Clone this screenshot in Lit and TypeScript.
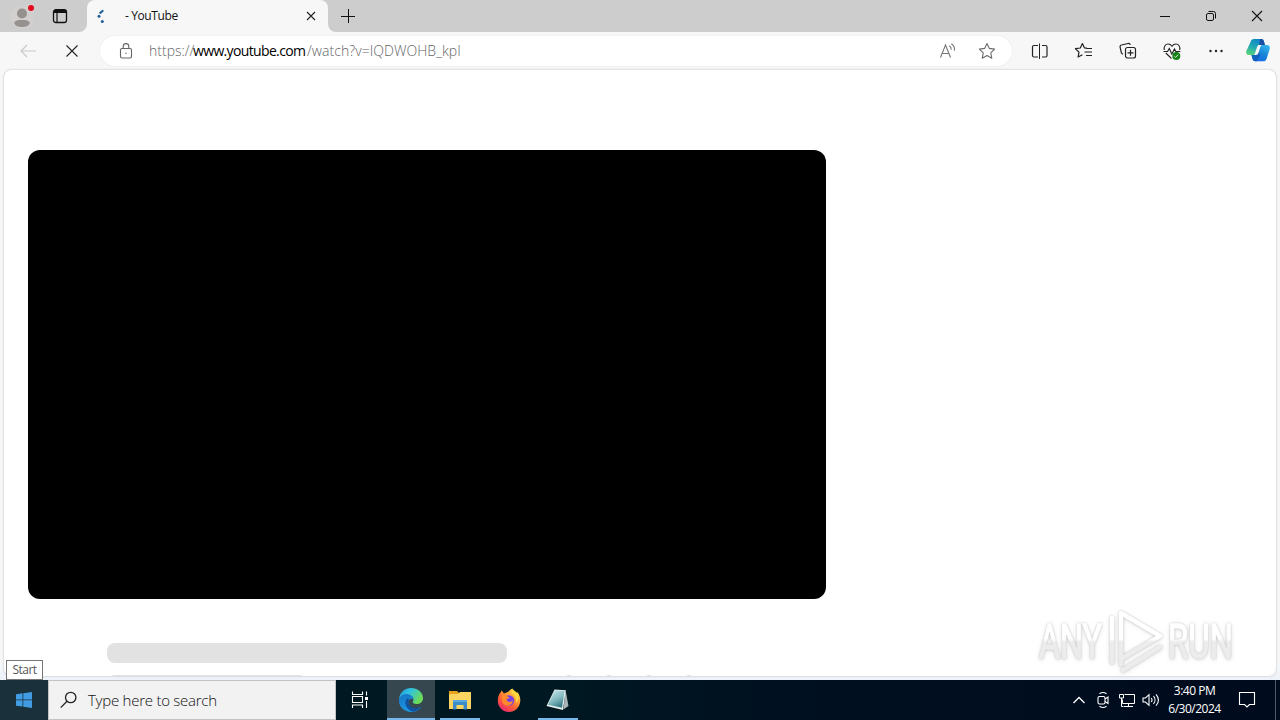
import {css, html, LitElement, svg} from 'lit'
import {customElement, property} from 'lit/decorators.js'
import {classMap} from 'lit/directives/class-map.js'


const taskIcons = {
    tasks: svg`
      <g fill="none" stroke="#fff" stroke-width="1.1">
        <path d="M4.500 3.500v3h10v-3M4.500 20v-3h10v3M4.500 8.500h10v6h-10z"/>
        <path d="M18.500 3.500v4M18.500 13v7"/>
      </g>
      <path d="M17 9h3v3h-3z" fill="#fff"/>`,
    edge: svg`
      <defs>
        <linearGradient id="wave" x1="0" y1="0" x2="1" y2=".5">
          <stop offset="0" stop-color="#2295dc"/>
          <stop offset=".45" stop-color="#2fc3df"/>
          <stop offset="1" stop-color="#6ddb56"/>
        </linearGradient>
        <linearGradient id="body" x1="0" y1="0" x2=".3" y2="1">
          <stop offset="0" stop-color="#1676c5"/>
          <stop offset="1" stop-color="#1c98e4"/>
        </linearGradient>
      </defs>
      <path d="M0 11C.8 4.600 5.600 0 12 0c7 0 12 4.700 12 10 0 4-3 6-6.500 6-3 0-4.200-1.200-3.600-2.300 1.300-2.200.3-5.700-3.400-6.500C6 6.300 1.500 8.200 0 11z" fill="url(#wave)"/>
      <path d="M0 12c.7-4 4-6 7.600-6 3.600 0 6.700 2.300 7 5.500-1.800-1.300-4.100-.7-5 1.300-1.600 3.700 2 8 7.500 7.600 2-.1 3.700-.9 4.900-1.700C20 22 16.400 24 12 24 5.300 24-.6 18.700 0 12z" fill="url(#body)"/>
      <path d="M8 10.500c-3.600 4-1 11 6 13.200 3.500-.6 6.300-2.400 8-5-5.500 3-12 .7-12.700-4.200-.1-1.300.2-2.500.9-3.200-.7-.7-1.500-.9-2.200-.8z" fill="#10529d"/>`,
    files: svg`
      <path d="M1 3h8l2 2h12v16H1z" fill="#e8a31e"/>
      <path d="M1 6h9l2-2h11v17H1z" fill="#fcd462"/>
      <path d="M5 12h14v9.500h-3.500V17h-7v4.500H5z" fill="#3c8cc9"/>
      <path d="M5 12h14v2H5z" fill="#58aadd"/>`,
    firefox: svg`
      <defs>
        <linearGradient id="flame" x1=".9" y1="0" x2=".2" y2="1">
          <stop offset="0" stop-color="#fff44f"/>
          <stop offset=".35" stop-color="#ffa436"/>
          <stop offset=".65" stop-color="#ff5b36"/>
          <stop offset="1" stop-color="#e9257a"/>
        </linearGradient>
      </defs>
      <path d="M3.500 4.500l1.200-2 2.300 3 3-1.200C12 4 12.500 1.500 15.500.5c.2 2 3 3 4.300 5l.7-1.500c2 2.800 3 6 2.800 9C22.800 19.500 18 24 12 24S.8 19.200.8 13c0-3.500.8-6.200 2.700-8.500z" fill="url(#flame)"/>
      <circle cx="12" cy="12.500" r="5.200" fill="#7542e5"/>
      <path d="M5 8c3-1.200 6 .3 7.500 2l-3 1.300c.2 2.700 3.500 3.700 6.500 1.300-.5 4-4 5.800-7 5C5.500 16.600 4 12 5 8z" fill="#ff8a2d"/>
      <path d="M14.500 5c3.200 2 5.500 6 4.300 10 3.500-3 3.500-8 .9-10.500L16 1.500z" fill="#ffd83d"/>`,
    notepad: svg`
      <defs>
        <linearGradient id="glass" x1=".2" y1="0" x2=".7" y2="1">
          <stop offset="0" stop-color="#c4e6e8"/>
          <stop offset=".55" stop-color="#7fb7be"/>
          <stop offset="1" stop-color="#2f727e"/>
        </linearGradient>
      </defs>
      <path d="M19.500 2l3 16-5 3.500z" fill="#a9b4b6"/>
      <path d="M8.500 1.500l11.300.8L17 22 .5 18z" fill="#e6eff0"/>
      <path d="M8.900 2.300l9.700.8L16 19.800 2 16.800z" fill="url(#glass)"/>`,
}

@customElement('task-button')
export class TaskButton extends LitElement {

    @property()
    icon: keyof typeof taskIcons = 'tasks'

    @property({type: Boolean})
    active = false

    @property({type: Boolean})
    running = false

    render() {
        return html`
            <button class=${classMap({task: true, active: this.active, running: this.running})}>
                <svg width="24" height="24" viewBox="0 0 24 24">${taskIcons[this.icon]}</svg>
            </button>
        `
    }

    static styles = css`
      :host {
        display: block;
        width: 49px;
        height: 40px;
      }

      .task {
        display: flex;
        align-items: center;
        justify-content: center;
        width: 48px;
        height: 40px;
        margin: 0 auto 0 0;
        padding: 0;
        border: 0;
        background: transparent;
      }

      .running {
        width: 40px;
        margin-left: 4px;
        border-bottom: 2px solid #76b9ed;
        padding-top: 2px;
      }

      .active {
        width: 48px;
        margin-left: 0;
        background: #36474f;
      }
    `
}

@customElement('browser-tabs')
export class BrowserTabs extends LitElement {

    render() {
        return html`
            <div class="tools">
                <svg width="24" height="26" viewBox="0 0 24 26">
                    <circle cx="12" cy="14" r="11.500" fill="#d2d0cf"/>
                    <circle cx="12" cy="10.500" r="5" fill="#96918e"/>
                    <path d="M4 20c1.200-2.500 3.500-3 8-3s6.800.5 8 3c-1.500 3-4 4-8 4s-6.500-1-8-4z" fill="#96918e"/>
                    <circle cx="21" cy="5" r="4" fill="#d8d0d0"/>
                    <circle cx="21" cy="5" r="3" fill="#e00b1c"/>
                </svg>
                <svg width="16" height="16" viewBox="0 0 16 16" fill="none" stroke="#111">
                    <rect x="1.500" y="1.700" width="13" height="12.800" rx="2.300" stroke-width="1.300"/>
                    <path d="M2 3.500h12" stroke-width="3"/>
                    <path d="M5 4v10" stroke-width="1.200"/>
                </svg>
            </div>
            <div class="tab">
                <svg class="spinner" width="16" height="16" viewBox="0 0 16 16" fill="#235f9b">
                    <path d="M4.300 4.800L6.600 3" stroke="#235f9b" stroke-width="2.200" stroke-linecap="round"/>
                    <circle cx="3" cy="8.300" r="1.500"/>
                    <circle cx="6.300" cy="13.500" r="1.500"/>
                </svg>
                <span class="title">- YouTube</span>
                <svg width="10" height="10" viewBox="0 0 10 10" stroke="#222" stroke-width="1.100">
                    <path d="M1 1l8 8M9 1L1 9"/>
                </svg>
            </div>
            <div class="rest">
                <svg width="14" height="14" viewBox="0 0 14 14" stroke="#111" stroke-width="1">
                    <path d="M7.500 0v14M0 7.500h14"/>
                </svg>
                <div class="controls">
                    <svg width="46" height="32" viewBox="0 0 46 32" stroke="#111"><path d="M18 16.500h10"/></svg>
                    <svg width="46" height="32" viewBox="0 0 46 32" fill="none" stroke="#111">
                        <rect x="18.500" y="13.500" width="7" height="7" rx="1.500"/>
                        <path d="M20.500 11.500h5a2 2 0 0 1 2 2v5"/>
                    </svg>
                    <svg width="46" height="32" viewBox="0 0 46 32" stroke="#111" stroke-width="1.100">
                        <path d="M18 11l10 10M28 11L18 21"/>
                    </svg>
                </div>
            </div>
        `
    }

    static styles = css`
      :host {
        display: flex;
        height: 32px;
        background: linear-gradient(#cdcdcd 0 16px, #f7f7f7 16px);
      }

      .tools {
        display: flex;
        align-items: center;
        gap: 18px;
        box-sizing: border-box;
        width: 87px;
        padding-left: 10px;
        background: #cdcdcd;
        border-bottom-right-radius: 8px;
      }

      .tab {
        display: flex;
        align-items: center;
        flex: none;
        box-sizing: border-box;
        width: 241px;
        height: 32px;
        padding: 0 12px 0 9px;
        background: #f7f7f7;
        border-radius: 8px 8px 0 0;
      }

      .spinner {
        flex: none;
      }

      .title {
        flex: 1;
        margin-left: 13px;
        font-size: 12px;
        line-height: 18px;
        padding-bottom: 1px;
        letter-spacing: -0.4px;
        color: #111;
      }

      .rest {
        display: flex;
        flex: 1;
        align-items: center;
        padding-left: 13px;
        background: #cdcdcd;
        border-bottom-left-radius: 8px;
      }

      .controls {
        display: flex;
        margin-left: auto;
      }
    `
}

@customElement('browser-toolbar')
export class BrowserToolbar extends LitElement {

    render() {
        return html`
            <svg class="back" width="16" height="14" viewBox="0 0 16 14" fill="none" stroke="#c9c9c9" stroke-width="1.200">
                <path d="M16 7H1M7 1L1 7l6 6"/>
            </svg>
            <svg class="stop" width="12" height="12" viewBox="0 0 12 12" stroke="#222" stroke-width="1.100">
                <path d="M.5.5l11 11M11.500.5l-11 11"/>
            </svg>
            <div class="address">
                <svg width="14" height="16" viewBox="0 0 14 16" fill="none" stroke="#666" stroke-width="1.100">
                    <rect x="1.500" y="5.500" width="11" height="9.500" rx="1.500"/>
                    <path d="M4.200 5.500V3.400a2.800 2.800 0 0 1 5.600 0v2.100"/>
                    <circle cx="7" cy="10.200" r=".7" fill="#666" stroke="none"/>
                </svg>
                <span class="url"><span class="scheme">https://</span><span class="domain">www.youtube.com</span><span class="path">/watch?v=IQDWOHB_kpI</span></span>
                <svg class="read" width="18" height="16" viewBox="0 0 18 16" fill="none" stroke="#777" stroke-width="1.100">
                    <path d="M1.500 14.500L6.500 2l5 12.500M3.300 10.500h6.400"/>
                    <path d="M10.300 2.800c1.400.9 2 2.300 1.900 4M12.300.8c2.600 1.700 3.600 4 3.200 7"/>
                </svg>
                <svg width="18" height="18" viewBox="0 0 18 18" fill="none" stroke="#6b6b6b" stroke-width="1.100" stroke-linejoin="round">
                    <path d="M9 1.500l2.350 4.900 5.300.7-3.900 3.700 1 5.400L9 13.600l-4.750 2.600 1-5.400-3.900-3.700 5.300-.7z"/>
                </svg>
            </div>
            <div class="tools">
                <svg width="20" height="20" viewBox="0 0 20 20" fill="none" stroke="#222" stroke-width="1.200">
                    <path d="M8 4.500H4a1.500 1.500 0 0 0-1.500 1.500v8.500A1.500 1.500 0 0 0 4 16h4M12 4.500h3.500A1.500 1.500 0 0 1 17 6v8.500a1.500 1.500 0 0 1-1.500 1.500H12"/>
                    <path d="M9.500 2.500v15.500" stroke-width="1"/>
                </svg>
                <svg width="20" height="20" viewBox="0 0 20 20" fill="none" stroke="#222" stroke-width="1.200" stroke-linejoin="round">
                    <path d="M13 7.200l-2.500-.2L8.400 2.500 6.300 7l-4.800.7 3.500 3.400-.9 4.900 4.300-2.200M12 7.500h6M10.500 11h7.500M12 14.500h6"/>
                </svg>
                <svg width="20" height="20" viewBox="0 0 20 20" fill="none" stroke="#222" stroke-width="1.200">
                    <path d="M5 13.200c-1-.2-1.500-.8-1.700-1.600L2.100 6.200c-.2-1 .3-2 1.400-2.200l6.500-1.500c1-.2 2 .3 2.300 1.400"/>
                    <rect x="7.500" y="6.500" width="10" height="10.500" rx="2"/>
                    <path d="M12.500 8.800v6M9.500 11.800h6"/>
                </svg>
                <svg width="20" height="20" viewBox="0 0 20 20" fill="none" stroke="#222" stroke-width="1.100">
                    <path d="M2.300 9C1.500 5.500 3.500 3 6 3c1.700 0 3 .8 4 2.200C11 3.800 12.300 3 14 3c2.500 0 4.500 2.500 3.700 6M3.800 12l5.700 5.500"/>
                    <path d="M1.500 10.500h4l1.800-3 2.500 5.500L12.500 8l1.300 2.500h4.500"/>
                    <circle cx="14.300" cy="15" r="4" fill="#178017" stroke="none"/>
                    <path d="M12.300 15.200l1.300 1.200 2.600-2.800" stroke="#d7f1d7" stroke-width="1"/>
                </svg>
                <svg width="20" height="20" viewBox="0 0 20 20" fill="#222">
                    <circle cx="4.500" cy="10" r="1.200"/>
                    <circle cx="10" cy="10" r="1.200"/>
                    <circle cx="15.500" cy="10" r="1.200"/>
                </svg>
            </div>
            <svg class="copilot" width="24" height="24" viewBox="0 0 24 24">
                <defs>
                    <linearGradient id="left" x1=".6" y1="0" x2=".2" y2="1">
                        <stop offset="0" stop-color="#0d85c8"/>
                        <stop offset=".5" stop-color="#22aab5"/>
                        <stop offset="1" stop-color="#59d477"/>
                    </linearGradient>
                    <linearGradient id="right" x1=".8" y1="0" x2=".2" y2="1">
                        <stop offset="0" stop-color="#37b4f0"/>
                        <stop offset=".5" stop-color="#1684d5"/>
                        <stop offset="1" stop-color="#1765e8"/>
                    </linearGradient>
                </defs>
                <path d="M4.500 3C5.300.8 6 0 8 0h7c2 0 2.600 1.200 3.100 3l.8 3H16c-2 0-3 1-3.500 2.800L10.500 16H3C.7 16-.3 14.300.3 12z" fill="url(#left)"/>
                <path d="M14 0h1c2 0 2.600 1.200 3.100 3l.8 3H16c-1.500 0-2.300.5-3 1.500z" fill="#1b50a4"/>
                <path d="M18.500 6H21c2.500 0 3.200 2 2.700 4l-3 9.500c-.8 2-1.600 2.800-3.700 2.800H9.500C7.500 22.300 6.800 21 6.300 19l-.8-3h3c1.500 0 2.400-.8 2.900-2.300L13.500 7.500C14 6.400 14.800 6 16 6z" fill="url(#right)"/>
                <path d="M11.700 8.500L9.500 16H5.500l.8 3c.5 2 1.200 3.300 3.200 3.300h1.300l3.300-5.800z" fill="#1260be"/>
                <path d="M13.200 6h2.700c-1.100.6-1.500 1.700-1.800 2.800l-1.600 5c-.5 1.500-1.300 2.200-2.700 2.200H8.300l2.900-8.200c.4-1.200 1-1.800 2-1.800z" fill="#f7f7f7"/>
            </svg>
        `
    }

    static styles = css`
      :host {
        display: flex;
        align-items: center;
        height: 38px;
        background: #f7f7f7;
      }

      svg {
        flex: none;
      }

      .back {
        margin-left: 20px;
      }

      .stop {
        margin-left: 30px;
      }

      .address {
        display: flex;
        align-items: center;
        box-sizing: border-box;
        width: 912px;
        height: 30px;
        margin-left: 22px;
        padding: 0 16px 0 19px;
        border-radius: 15px;
        background: #fff;
        box-shadow: 0 0 2px #e4e4e4;
      }

      .url {
        display: flex;
        margin-left: 16px;
        font-size: 14px;
        line-height: 18px;
        padding-bottom: 1px;
        font-weight: 300;
        color: #666;
      }

      .scheme {
        width: 44px;
      }

      .domain {
        width: 114px;
        font-weight: 400;
        letter-spacing: -0.65px;
        color: #000;
      }

      .path {
        letter-spacing: 0.05px;
      }

      .read {
        margin: 0 21px 0 auto;
      }

      .tools {
        display: flex;
        gap: 24px;
        margin-left: 18px;
      }

      .copilot {
        margin-left: 20px;
      }
    `
}

@customElement('watch-page')
export class WatchPage extends LitElement {

    render() {
        return html`
            <div class="player"></div>
            <div class="heading"></div>
            <div class="meta">
                <div class="owner"></div>
                ${[0, 1, 2, 3].map(() => html`<div class="action"></div>`)}
            </div>
        `
    }

    static styles = css`
      :host {
        display: block;
        box-sizing: border-box;
        height: 606px;
        margin: 0 4px;
        padding: 80px 24px 0;
        overflow: hidden;
        background: #fff;
        border-radius: 7px;
        box-shadow: 0 0 2px #aaa;
      }

      .player {
        width: 798px;
        height: 449px;
        border-radius: 12px;
        background: #000;
      }

      .heading {
        width: 400px;
        height: 20px;
        margin: 44px 0 0 79px;
        border-radius: 8px;
        background: #e2e2e2;
      }

      .meta {
        display: flex;
        gap: 32px;
        margin: 12px 0 0 79px;
      }

      .owner {
        width: 200px;
        height: 20px;
        margin-right: 226px;
        border-radius: 8px;
        background: #e2e2e2;
      }

      .action {
        width: 8px;
        height: 8px;
        border-radius: 4px;
        background: #e2e2e2;
      }
    `
}

@customElement('task-bar')
export class TaskBar extends LitElement {

    @property()
    time = '3:40 PM'

    @property()
    date = '6/30/2024'

    render() {
        return html`
            <button class="start">
                <svg width="16" height="16" viewBox="0 0 16 16" fill="#429ce3">
                    <path d="M0 2.200l6.500-.9v6.200H0zM7.300 1.200L16 0v7.500H7.300zM0 8.300h6.500v6.300L0 13.700zM7.300 8.300H16V16l-8.700-1.200z"/>
                </svg>
            </button>
            <div class="search">
                <svg width="18" height="18" viewBox="0 0 18 18" fill="none" stroke="#222" stroke-width="1.300">
                    <circle cx="10.700" cy="6.500" r="5.200"/>
                    <path d="M7 10.300L.7 16.600"/>
                </svg>
                <span>Type here to search</span>
            </div>
            <task-button icon="tasks"></task-button>
            <task-button class="pinned" icon="edge" active running></task-button>
            <task-button icon="files" running></task-button>
            <task-button icon="firefox"></task-button>
            <task-button icon="notepad" running></task-button>
            <div class="tray">
                <svg width="12" height="20" viewBox="0 0 12 20" fill="none" stroke="#fff" stroke-width="1.300">
                    <path d="M.5 13L6 7.500l5.500 5.500"/>
                </svg>
                <svg class="meet" width="12" height="20" viewBox="0 0 12 20" fill="none" stroke="#fff" stroke-width="1.100">
                    <path d="M2.500 3.800c2-1.500 5-1.500 7 0M2.500 16.200c2 1.500 5 1.500 7 0"/>
                    <rect x="1" y="6.500" width="7" height="7.500" rx="1.500"/>
                    <path d="M8 9l3-2v6.500l-3-2"/>
                </svg>
                <svg class="network" width="18" height="20" viewBox="0 0 18 20" fill="none" stroke="#fff" stroke-width="1">
                    <path d="M6.500 4.500h10v9h-12v-4M10.500 13.500v3M6 16.500h9"/>
                    <path d="M1.500 4.500h4V8h-4zM3.500 8v8.500h2"/>
                </svg>
                <svg class="volume" width="18" height="20" viewBox="0 0 18 20" fill="none" stroke="#fff" stroke-width="1.100">
                    <path d="M1 8h2.500L7 4.700v10.600L3.500 12H1zM9.200 8c1 1.200 1 2.800 0 4M11.500 6.200c2 2.200 2 5.400 0 7.600M14 4.300c3 3.500 3 7.900 0 11.400"/>
                </svg>
                <div class="clock">
                    <span>${this.time}</span>
                    <span>${this.date}</span>
                </div>
                <svg class="notices" width="18" height="20" viewBox="0 0 18 20" fill="none" stroke="#fff" stroke-width="1.100">
                    <path d="M1.500 2.500h15v12h-5L9 17l-2.500-2.500h-5z"/>
                </svg>
                <div class="desktop"></div>
            </div>
        `
    }

    static styles = css`
      :host {
        display: flex;
        height: 40px;
        background: linear-gradient(90deg, #001820 0%, #001822 45%, #001020 60%, #000b1d 100%);
      }

      .start {
        display: flex;
        align-items: center;
        justify-content: center;
        width: 48px;
        padding: 0;
        border: 0;
        background: #1a303a;
      }

      .search {
        display: flex;
        align-items: center;
        box-sizing: border-box;
        width: 288px;
        padding: 0 11px;
        background: #f2f2f2;
        border: 1px solid #c2c4c5;
        font-size: 15px;
        font-weight: 300;
        letter-spacing: -0.25px;
        color: #111;
      }

      .search span {
        margin-left: 10px;
      }

      .pinned {
        margin-left: 2px;
      }

      .tray {
        display: flex;
        align-items: center;
        margin-left: auto;
      }

      .meet {
        margin-left: 12px;
      }

      .network {
        margin-left: 9px;
      }

      .volume {
        margin-left: 6px;
      }

      .clock {
        display: flex;
        flex-direction: column;
        align-items: center;
        width: 69px;
        font-size: 12px;
        line-height: 18px;
        letter-spacing: -0.5px;
        color: #fff;
      }

      .notices {
        margin-left: 9px;
      }

      .desktop {
        width: 4px;
        height: 40px;
        margin-left: 19px;
        border-left: 1px solid #4d5868;
      }
    `
}

@customElement('app-root')
export class AppRoot extends LitElement {

    render() {
        return html`
            <browser-tabs></browser-tabs>
            <browser-toolbar></browser-toolbar>
            <watch-page></watch-page>
            <task-bar></task-bar>
            <div class="tooltip">Start</div>
            <svg class="watermark" width="216" height="76" viewBox="0 0 216 76">
                <defs>
                    <linearGradient id="fade" gradientUnits="userSpaceOnUse" x1="0" y1="10" x2="0" y2="60">
                        <stop offset=".5" stop-color="#fff"/>
                        <stop offset=".56" stop-color="#ececec"/>
                    </linearGradient>
                </defs>
                <g fill="url(#fade)" stroke="url(#fade)" stroke-width="1.400" font-family="Roboto" font-size="48">
                    <text x="7" y="54" textLength="63" lengthAdjust="spacingAndGlyphs">ANY</text>
                    <text x="136" y="54" textLength="65" lengthAdjust="spacingAndGlyphs">RUN</text>
                </g>
                <g fill="none" stroke="url(#fade)" stroke-width="4.500" stroke-linejoin="round" stroke-linecap="round">
                    <path d="M89 60V9l39 23L89 55"/>
                    <path d="M80 14v44M91 66l37-23"/>
                </g>
            </svg>
        `
    }

    static styles = css`
      :host {
        display: flex;
        flex-direction: column;
        position: relative;
        width: 1280px;
        height: 720px;
        overflow: hidden;
        background: linear-gradient(#f7f7f7 0 660px, #eef3fa 678px);
        font-family: 'Open Sans', 'Noto Sans', sans-serif;
      }

      task-bar {
        margin-top: auto;
      }

      .tooltip {
        position: absolute;
        left: 6px;
        top: 660px;
        box-sizing: border-box;
        width: 37px;
        height: 20px;
        border: 1px solid #767676;
        background: #fff;
        color: #575757;
        font-size: 12px;
        line-height: 18px;
        letter-spacing: -0.5px;
        text-align: center;
      }

      .watermark {
        position: absolute;
        left: 1032px;
        top: 604px;
        filter: drop-shadow(0 0 1px rgba(0, 0, 0, 0.18)) drop-shadow(0 1px 2px rgba(0, 0, 0, 0.12));
      }
    `
}

declare global {
    interface HTMLElementTagNameMap {
        'app-root': AppRoot
        'browser-tabs': BrowserTabs
        'browser-toolbar': BrowserToolbar
        'watch-page': WatchPage
        'task-bar': TaskBar
        'task-button': TaskButton
    }
}
